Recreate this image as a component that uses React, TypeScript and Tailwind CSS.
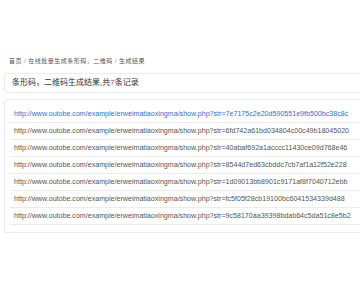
const links = [
  '7e7175c2e20d590551e9fb500bc38c8c',
  '6fd742a61bd034804c00c49b18045020',
  '40abaf692a1acccc11430ce09d768e46',
  '8544d7ed63cbddc7cb7af1a12f52e228',
  '1d09013bb8901c9171af8f7040712ebb',
  'fc5f05f28cb19100bc6041534339d488',
  '9c58170aa39398bdab64c5da51c8e5b2',
]

export default function App() {
  return (
    <div className="w-[360px] h-[300px] overflow-hidden bg-white font-['Liberation_Sans','Noto_Sans_CJK_SC',sans-serif]">
      <div className="w-[400px] pt-[57px] pl-[4px]">
        {/* Breadcrumb */}
        <div className="pl-[5px] text-[6px] tracking-[0.5px] leading-[8px] text-[#555] flex items-center">
          <span>首页</span>
          <span className="px-[2px] text-[#888]">/</span>
          <span>在线批量生成条形码，二维码</span>
          <span className="px-[2px] text-[#888]">/</span>
          <span>生成结果</span>
        </div>
        {/* Title */}
        <div className="mt-[8px] h-[20px] border border-[#ececec] rounded-[2px] pl-[7px] flex items-center text-[8px] text-[#333]">
          条形码，二维码生成结果,共<span className="text-[#e4393c]">7</span>条记录
        </div>
        {/* Results */}
        <div className="mt-[6px] border border-[#ececec] rounded-[2px] pt-[6px] pb-[7px] pl-[5px]">
          <ul>
            {links.map((s, i) => (
              <li key={s} className="h-[17px] border-b border-[#ececec] pl-[4px] flex items-center">
                <a
                  href="#0"
                  className={'text-[7.1px] whitespace-nowrap ' + (i === 0 ? 'text-[#2f6fd6]' : 'text-[#555]')}
                >
                  http://www.outobe.com/example/erweimatiaoxingma/show.php?str={s}
                </a>
              </li>
            ))}
          </ul>
        </div>
      </div>
    </div>
  )
}
